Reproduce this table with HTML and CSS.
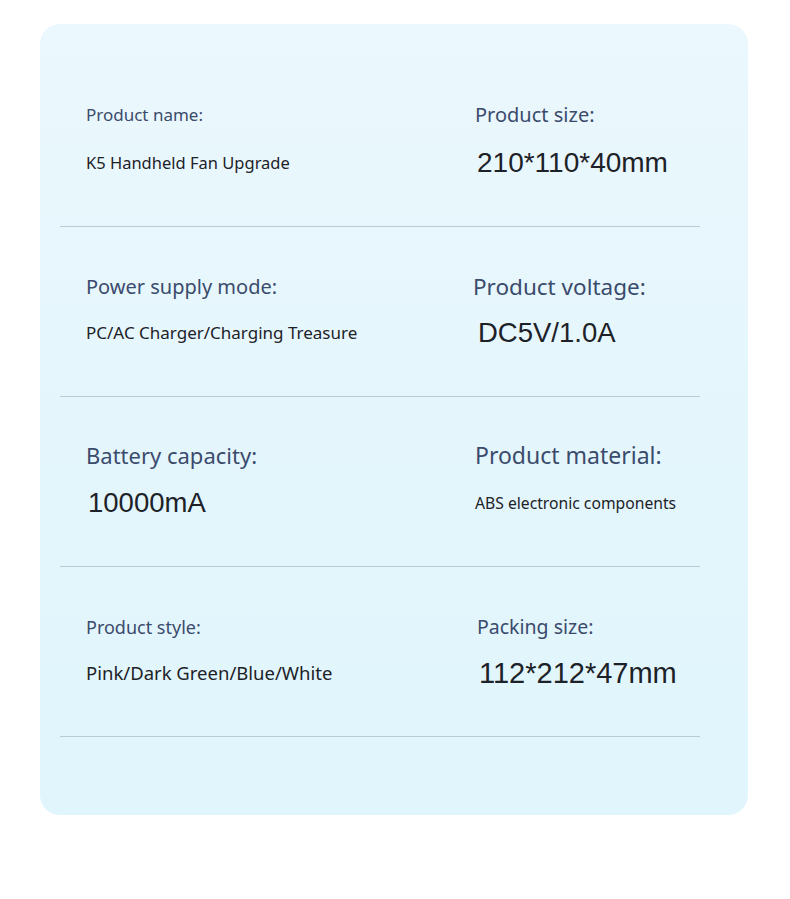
FILE: index.html
```html
<!DOCTYPE html>
<html lang="en">
<head>
    <meta charset="UTF-8">
    <title>K5 Handheld Fan - Specifications</title>
    <link rel="stylesheet" href="styles.css">
</head>
<body>
    <div class="spec-card">
        <div class="spec-row">
            <div class="spec-col">
                <div class="label l-17 up">Product name:</div>
                <div class="value v-165">K5 Handheld Fan Upgrade</div>
            </div>
            <div class="spec-col">
                <div class="label l-20 up">Product size:</div>
                <div class="value num v-28">210*110*40mm</div>
            </div>
        </div>
        <div class="spec-row">
            <div class="spec-col">
                <div class="label l-20">Power supply mode:</div>
                <div class="value v-17">PC/AC Charger/Charging Treasure</div>
            </div>
            <div class="spec-col shift-left">
                <div class="label l-225">Product voltage:</div>
                <div class="value num v-275 nudge">DC5V/1.0A</div>
            </div>
        </div>
        <div class="spec-row">
            <div class="spec-col">
                <div class="label l-22 up">Battery capacity:</div>
                <div class="value num v-275">10000mA</div>
            </div>
            <div class="spec-col">
                <div class="label l-23 up">Product material:</div>
                <div class="value v-157">ABS electronic components</div>
            </div>
        </div>
        <div class="spec-row">
            <div class="spec-col">
                <div class="label l-18">Product style:</div>
                <div class="value v-185">Pink/Dark Green/Blue/White</div>
            </div>
            <div class="spec-col shift-right">
                <div class="label l-195">Packing size:</div>
                <div class="value num v-29">112*212*47mm</div>
            </div>
        </div>
    </div>
</body>
</html>
```

FILE: styles.css
```css
* {
    margin: 0;
    padding: 0;
    box-sizing: border-box;
}

body {
    background: #ffffff;
    font-family: "Noto Sans", "Open Sans", sans-serif;
}

.spec-card {
    margin: 24px 0 0 40px;
    width: 708px;
    height: 791px;
    border-radius: 20px;
    background: linear-gradient(180deg, #ebf8fd 0%, #e4f6fc 50%, #e0f5fc 100%);
    padding: 33px 48px 0 20px;
}

.spec-row {
    height: 170px;
    border-bottom: 1px solid #b8ccd6;
    display: grid;
    grid-template-columns: 389px 1fr;
    padding-left: 26px;
}

.spec-col {
    padding-top: 45px;
}

.shift-left {
    margin-left: -2px;
}

.shift-right {
    margin-left: 2px;
}

.label {
    line-height: 30px;
    color: #3b4b6c;
    white-space: nowrap;
}

.label.up {
    margin-top: -2px;
}

.value {
    margin-top: 16px;
    line-height: 30px;
    color: #1d2228;
    white-space: nowrap;
}

.up + .value {
    margin-top: 18px;
}

.num {
    font-family: "Liberation Sans", Arial, sans-serif;
    padding-left: 2px;
}

.num.nudge {
    padding-left: 5px;
}

.l-17 { font-size: 17px; }
.l-18 { font-size: 18px; }
.l-195 { font-size: 19.5px; }
.l-20 { font-size: 20px; }
.l-22 { font-size: 22px; }
.l-225 { font-size: 22.5px; }
.l-23 { font-size: 23px; }

.v-157 { font-size: 15.7px; }
.v-165 { font-size: 16.5px; }
.v-17 { font-size: 17px; }
.v-185 { font-size: 18.5px; }
.v-275 { font-size: 27.5px; }
.v-28 { font-size: 28px; }
.v-29 { font-size: 29px; }
```
